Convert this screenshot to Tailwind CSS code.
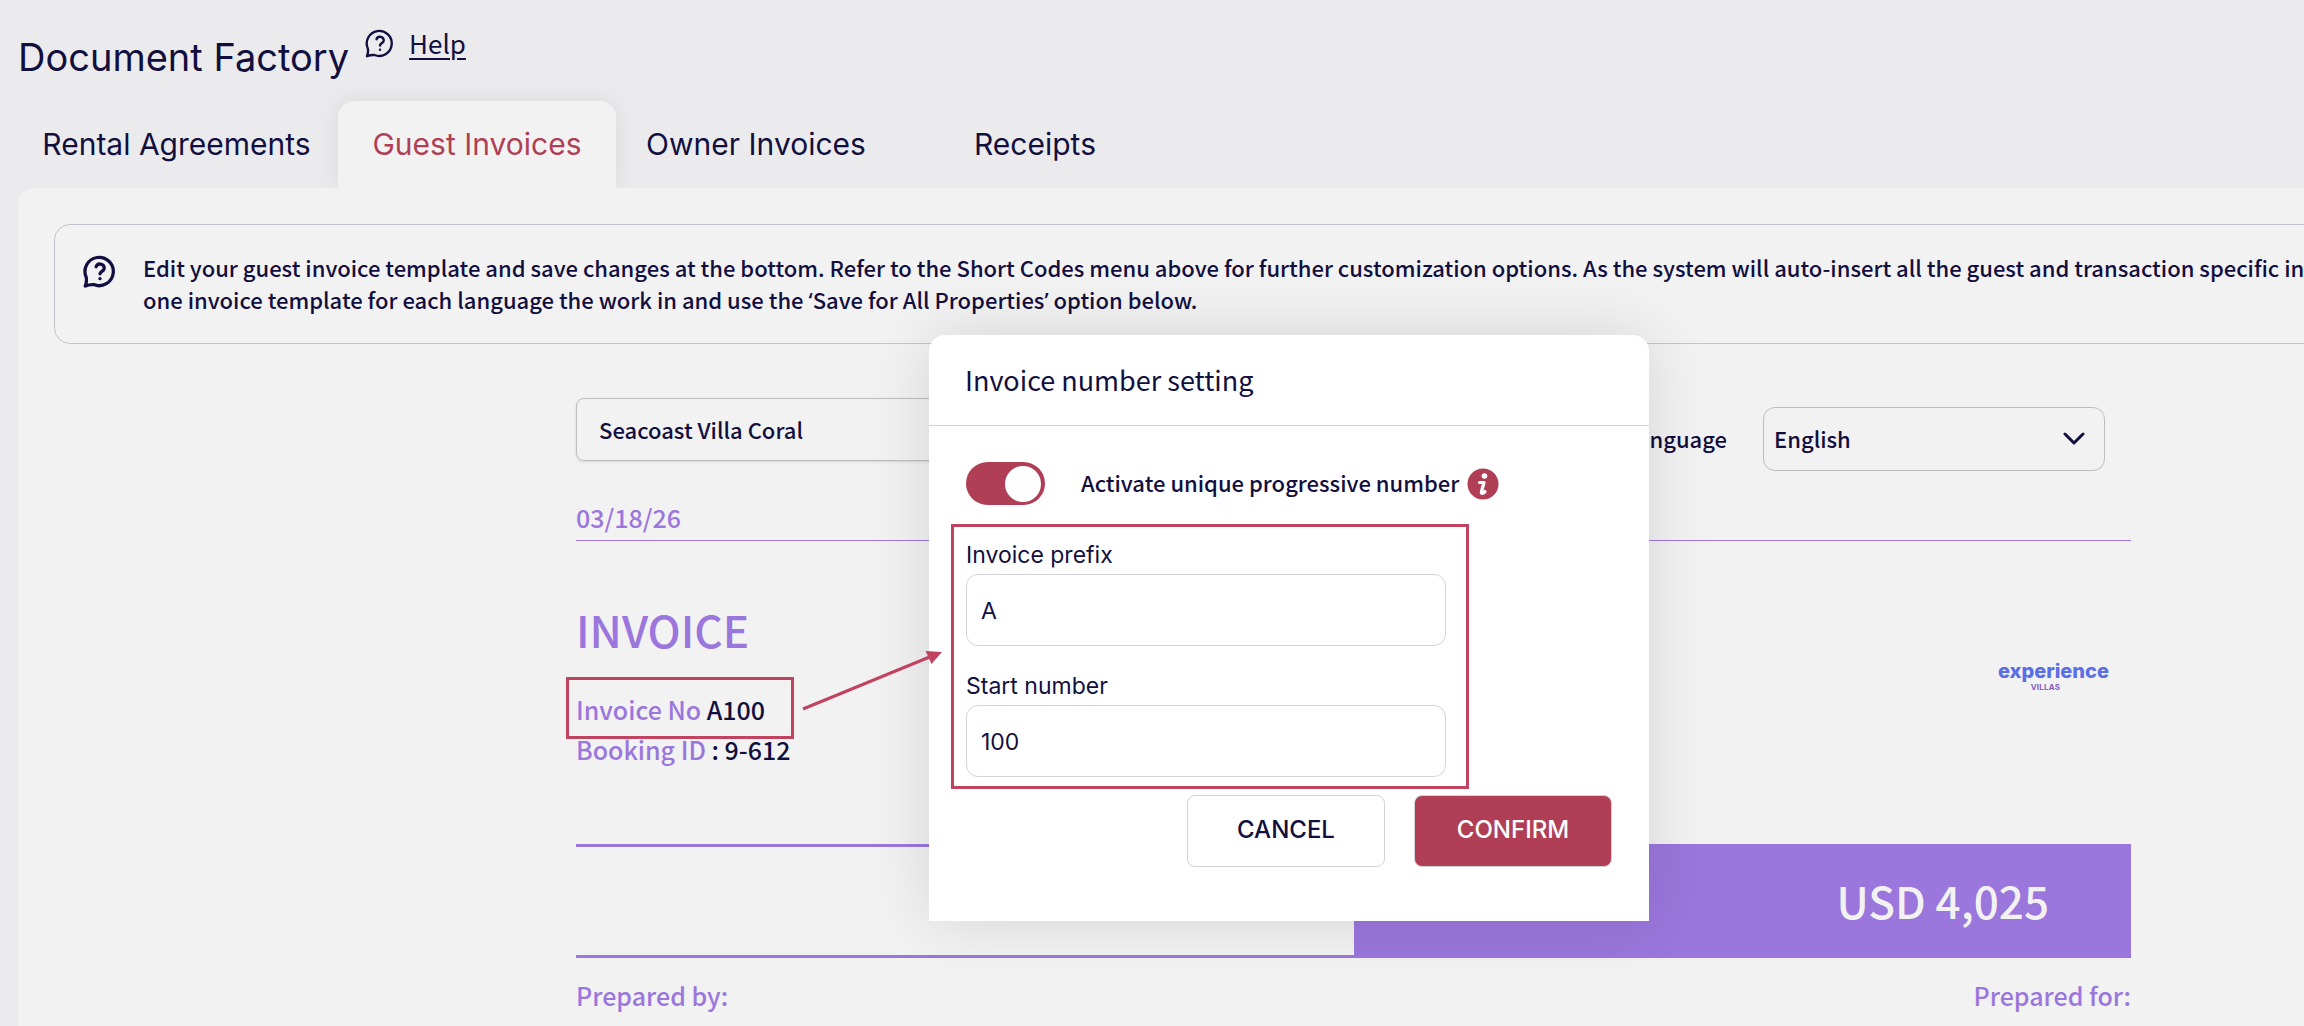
<!DOCTYPE html>
<html lang="en">
<head>
<meta charset="utf-8">
<title>Document Factory</title>
<script src="https://cdn.jsdelivr.net/npm/@tailwindcss/browser@4"></script>
</head>
<body class="bg-[#ebebed] text-[#120f3f] min-h-screen overflow-hidden font-['Noto_Sans_CJK_SC',sans-serif] text-[22px] font-medium">
<div class="relative">
  <header class="flex items-start gap-4 pl-[18px] pt-6">
    <h1 class="font-['Inter',sans-serif] text-[38px] leading-[66px] font-normal">Document Factory</h1>
    <a href="#" class="flex items-center gap-[14px] text-[26px] leading-[38px] font-normal underline underline-offset-4 decoration-2">
      <svg class="size-[30px]" viewBox="0 0 24 24" fill="none" stroke="currentColor" stroke-width="1.900" stroke-linecap="round" stroke-linejoin="round" aria-hidden="true"><path d="M2.300 16.500A10 10 0 1 1 7.600 21.600Q4.500 21.400 1.600 22.600 2.800 20 2.300 16.500Z"/><path d="M9.200 9a3 3 0 0 1 5.800 1c0 2-3 2.400-3 4"/><path d="M12 17.300v.1"/></svg>
      Help</a>
  </header>
  <nav class="flex pl-[18px] pt-[11px] h-[98px] font-['Inter',sans-serif] text-[30px] leading-[87px] font-normal text-center">
    <a href="#" class="w-[317px] shrink-0">Rental Agreements</a>
    <a href="#" class="ml-[3px] w-[278px] shrink-0 h-[87px] rounded-t-2xl bg-[#f2f2f2] text-[#b03f56] shadow-[0_0_24px_rgba(0,0,0,0.08)]">Guest Invoices</a>
    <a href="#" class="w-[280px] shrink-0">Owner Invoices</a>
    <a href="#" class="w-[278px] shrink-0">Receipts</a>
  </nav>
  <main class="relative ml-[18px] w-[calc(100%+367px)] rounded-tl-2xl bg-[#f2f2f2] px-9 pt-9 pb-6">
    <section class="flex h-[120px] items-start gap-[26px] rounded-2xl border border-[#c4c4ce] pl-7 pt-[26px]">
      <svg class="mt-[3px] size-[34px]" viewBox="0 0 24 24" fill="none" stroke="currentColor" stroke-width="2.300" stroke-linecap="round" stroke-linejoin="round" aria-hidden="true"><path d="M2.300 16.500A10 10 0 1 1 7.600 21.600Q4.500 21.400 1.600 22.600 2.800 20 2.300 16.500Z"/><path d="M9.200 9a3 3 0 0 1 5.800 1c0 2-3 2.400-3 4"/><path d="M12 17.300v.1"/></svg>
      <p class="whitespace-nowrap leading-8">Edit your guest invoice template and save changes at the bottom. Refer to the Short Codes menu above for further customization options. As the system will auto-insert all the guest and transaction specific in<br>one invoice template for each language the work in and use the <span class="font-['Noto_Sans',sans-serif]">‘</span>Save for All Properties<span class="font-['Noto_Sans',sans-serif]">’</span> option below.</p>
    </section>
    <article class="mx-auto w-full max-w-[1555px] pt-[54px]">
      <div class="flex items-start justify-between pr-[26px]">
        <input aria-label="Property" value="Seacoast Villa Coral" class="h-[63px] w-[520px] rounded-lg border border-[#bdbdbf] px-[22px] pb-[2px] shadow-sm">
        <div class="mt-[9px] flex items-center gap-9">
          <label for="lang" class="pb-[2px]">Language</label>
          <div class="relative">
            <select id="lang" class="h-16 w-[342px] appearance-none rounded-xl border border-[#bdbdbf] px-[10px] pb-[2px]"><option>English</option></select>
            <svg class="pointer-events-none absolute right-5 top-6 h-4 w-[22px]" viewBox="0 0 22 16" fill="none" stroke="currentColor" stroke-width="3" stroke-linecap="round" stroke-linejoin="round" aria-hidden="true"><path d="M2 3l9 9 9-9"/></svg>
          </div>
        </div>
      </div>
      <p class="mt-6 border-b border-[#9b76dd] pb-px text-[25px] leading-[44px] text-[#9b76dd]">03/18/26</p>
      <div class="flex items-start justify-between pt-14">
        <div class="text-[25px] leading-[40px] text-[#9b76dd]">
          <h2 class="text-[44px] leading-[64px]">INVOICE</h2>
          <p class="mt-7">Invoice No <span class="text-[#120f3f]">A100</span></p>
          <p>Booking ID <span class="text-[#120f3f]">: 9-612</span></p>
        </div>
        <div class="mr-[22px] mt-[60px] text-center font-['Inter',sans-serif]">
          <p class="text-[20px] leading-7 font-extrabold text-[#5a6fe6]">experience</p>
          <p class="-mt-1 pr-4 text-[8px] leading-3 font-bold tracking-wide text-[#8a5cc4]">VILLAS</p>
        </div>
      </div>
      <div class="mt-[75px] grid h-[114px] grid-cols-2 border-y-3 border-[#9b76dd]">
        <div class="col-start-2 bg-[#9b76dd] pr-[82px] text-right text-[44px] leading-[106px] text-[#f2f2f2]">USD 4,025</div>
      </div>
      <div class="mt-[17px] flex justify-between text-[25px] leading-[40px] text-[#9b76dd]"><p>Prepared by:</p><p>Prepared for:</p></div>
    </article>
  </main>

  <div role="dialog" aria-labelledby="dlg" class="absolute left-[929px] top-[335px] w-[720px] rounded-t-2xl bg-white pb-[54px] shadow-[0_0_64px_rgba(0,0,0,0.12)]">
    <h2 id="dlg" class="border-b border-[#cfd0d8] px-9 text-[27px] leading-[90px] font-normal">Invoice number setting</h2>
    <div class="flex items-center pl-[37px] pt-9">
      <input id="toggle" type="checkbox" role="switch" checked class="flex h-[43px] w-[79px] appearance-none items-center justify-end rounded-full bg-[#b03f56] pr-1 before:size-9 before:rounded-full before:bg-white before:content-['']">
      <label for="toggle" class="ml-9 pb-[2px]">Activate unique progressive number</label>
      <svg class="ml-2 size-8" viewBox="0 0 32 32" aria-hidden="true"><circle cx="16" cy="16" r="15.500" fill="#b03f56"/><circle cx="17.500" cy="8" r="2.800" fill="#fff"/><path d="M12.500 14.500h4.500l-2.500 9q-.5 2 1 1.800 1.500-.3 2.500-1.800" fill="none" stroke="#fff" stroke-width="3.200" stroke-linecap="round" stroke-linejoin="round"/></svg>
    </div>
    <div class="ml-[22px] mt-[19px] flex w-[518px] flex-col border-3 border-[#c0435f] px-3 pb-[9px] pt-[10px] font-['Inter',sans-serif] text-[23px] font-normal">
      <label for="prefix" class="leading-9">Invoice prefix</label>
      <input id="prefix" value="A" class="mt-px h-[72px] w-[480px] rounded-xl border border-[#d3d3dc] px-[14px] pt-[2px]">
      <label for="start" class="mt-[22px] leading-9">Start number</label>
      <input id="start" value="100" class="mt-px h-[72px] w-[480px] rounded-xl border border-[#d3d3dc] px-[14px] pt-[2px]">
    </div>
    <div class="mt-[6px] flex justify-end gap-[29px] pr-[37px] font-['Inter',sans-serif] text-[24px] font-medium">
      <button class="h-[72px] w-[198px] rounded-lg border border-[#d3d3dc] pb-[2px]">CANCEL</button>
      <button class="h-[72px] w-[198px] rounded-lg border border-[#d3d3dc] bg-[#b03f56] pb-[2px] text-white">CONFIRM</button>
    </div>
  </div>
  <div class="absolute left-[566px] top-[677px] h-[62px] w-[228px] border-3 border-[#c0435f]"></div>
  <svg class="absolute left-[800px] top-[644px] h-[70px] w-[146px]" viewBox="0 0 146 70" aria-hidden="true"><path d="M3 65 132 12" stroke="#c0435f" stroke-width="3"/><path d="M142 8 125.500 7l6 13z" fill="#c0435f"/></svg>
</div>
</body>
</html>
